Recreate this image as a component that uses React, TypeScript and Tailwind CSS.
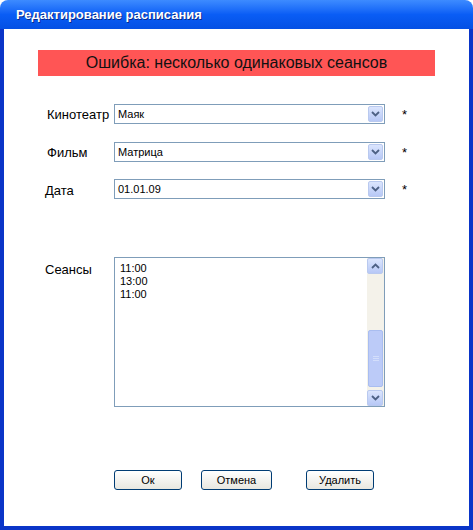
import React from 'react';

const ui = { fontFamily: '"Liberation Sans", Arial, sans-serif' };

const Chevron: React.FC<{ up?: boolean }> = ({ up }) => (
  <svg width="9" height="6" viewBox="0 0 9 6">
    <path
      d={up ? 'M1 5 L4.5 1.5 L8 5' : 'M1 1 L4.5 4.5 L8 1'}
      fill="none"
      stroke="#4d6185"
      strokeWidth="1.8"
    />
  </svg>
);

const ArrowBox: React.FC<{ up?: boolean; className?: string }> = ({ up, className }) => (
  <div
    className={`flex items-center justify-center rounded-[2px] border border-[#b9c9ef] bg-gradient-to-b from-[#dbe5fd] to-[#b7c8f6] ${className ?? ''}`}
  >
    <Chevron up={up} />
  </div>
);

const Select: React.FC<{ value: string }> = ({ value }) => (
  <div className="flex h-[20px] w-[271px] items-center border border-[#7f9db9] bg-white">
    <span className="flex-1 pl-[3px] text-[11px] text-black">{value}</span>
    <ArrowBox className="mr-[1px] h-[16px] w-[15px]" />
  </div>
);

const Button: React.FC<{ label: string; className: string }> = ({ label, className }) => (
  <button
    className={`${className} h-[20px] rounded-[3px] border border-[#003c74] bg-gradient-to-b from-white to-[#e8e7e0] text-[11px] leading-[18px] text-black`}
  >
    {label}
  </button>
);

export default function App() {
  const times = ['11:00', '13:00', '11:00'];

  return (
    <div className="flex h-[530px] w-[473px] flex-col bg-white" style={ui}>
      {/* заголовок окна */}
      <div className="flex h-[29px] items-center rounded-t-[8px] bg-gradient-to-b from-[#3d8bff] via-[#0a5df5] to-[#0450e4] pl-[16px]">
        <span className="text-[13px] font-bold text-white [text-shadow:1px_1px_0_#0a2a8a]">
          Редактирование расписания
        </span>
      </div>

      <div className="flex flex-1 flex-col border-x-4 border-b-4 border-[#0a35c8] bg-white">
        {/* ошибка */}
        <div className="ml-[34px] mt-[21px] flex h-[26px] w-[397px] items-center justify-center bg-[#ff5555] text-[16px] text-[#111]">
          Ошибка: несколько одинаковых сеансов
        </div>

        {/* поля */}
        <div className="mt-[28px] flex h-[20px] items-center pl-[43px]">
          <span className="w-[67px] text-[13px] leading-[15px] text-black">Кинотеатр</span>
          <Select value="Маяк" />
          <span className="ml-[17px] text-[13px] leading-[15px] text-black">*</span>
        </div>
        <div className="mt-[18px] flex h-[20px] items-center pl-[43px]">
          <span className="w-[67px] text-[13px] leading-[15px] text-black">Фильм</span>
          <Select value="Матрица" />
          <span className="ml-[17px] text-[13px] leading-[15px] text-black">*</span>
        </div>
        <div className="mt-[17px] flex h-[20px] items-start pl-[41px]">
          <span className="w-[69px] pt-[4px] text-[13px] leading-[15px] text-black">Дата</span>
          <Select value="01.01.09" />
          <span className="ml-[17px] pt-[3px] text-[13px] leading-[15px] text-black">*</span>
        </div>

        {/* сеансы */}
        <div className="mt-[58px] flex items-start pl-[41px]">
          <span className="w-[69px] pt-[5px] text-[13px] leading-[15px] text-black">Сеансы</span>
          <div className="flex h-[150px] w-[271px] border border-[#7f9db9] bg-white">
            <div className="flex flex-1 flex-col pl-[5px] pt-[4px] text-[11px] leading-[13px] text-black">
              {times.map((t, i) => (
                <span key={i}>{t}</span>
              ))}
            </div>
            <div className="flex w-[17px] flex-col bg-[#f4f2ea]">
              <ArrowBox up className="h-[16px] w-[16px]" />
              <div className="flex flex-1 flex-col px-[1px]">
                <div className="flex-1" />
                <div className="mb-[3px] flex h-[57px] items-center justify-center rounded-[2px] border border-[#a9bdf0] bg-[#bccbf8]">
                  <div className="flex flex-col gap-[1px]">
                    <div className="h-[1px] w-[6px] bg-[#d3defb]" />
                    <div className="h-[1px] w-[6px] bg-[#d3defb]" />
                    <div className="h-[1px] w-[6px] bg-[#d3defb]" />
                  </div>
                </div>
              </div>
              <ArrowBox className="h-[16px] w-[16px]" />
            </div>
          </div>
        </div>

        {/* кнопки */}
        <div className="mt-[63px] flex items-start pl-[110px]">
          <Button label="Ок" className="w-[68px]" />
          <Button label="Отмена" className="ml-[19px] w-[71px]" />
          <Button label="Удалить" className="ml-[34px] w-[68px]" />
        </div>
      </div>
    </div>
  );
}
